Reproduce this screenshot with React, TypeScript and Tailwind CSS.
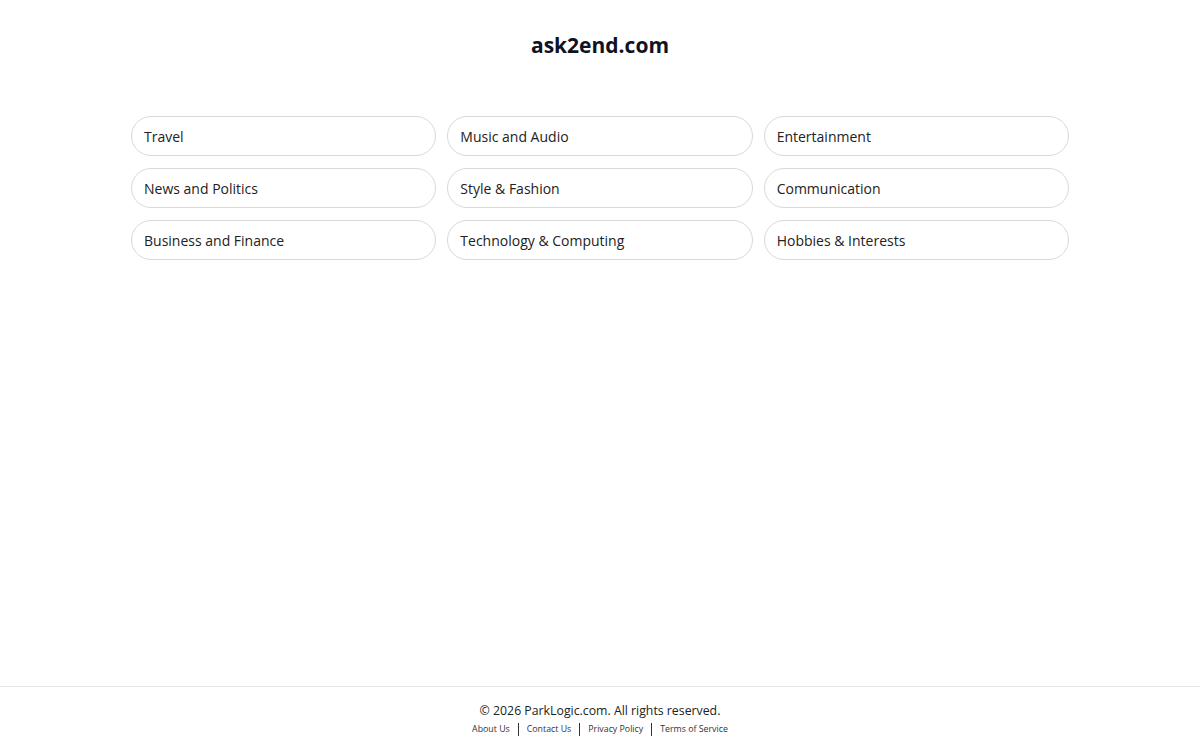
const categories = [
  "Travel",
  "Music and Audio",
  "Entertainment",
  "News and Politics",
  "Style & Fashion",
  "Communication",
  "Business and Finance",
  "Technology & Computing",
  "Hobbies & Interests",
];

const links = ["About Us", "Contact Us", "Privacy Policy", "Terms of Service"];

export default function App() {
  return (
    <div
      className="flex min-h-screen flex-col bg-white text-[#1a1a1a]"
      style={{ fontFamily: '"Open Sans", "Noto Sans", sans-serif' }}
    >
      <main className="flex-1">
        <h1 className="pt-[31px] text-center text-[21px] font-bold leading-[28px] text-[#0f1222]">
          ask2end.com
        </h1>
        <div className="mx-auto mt-[57px] grid w-[938px] grid-cols-3 gap-x-[11px] gap-y-3">
          {categories.map((c) => (
            <a
              key={c}
              href="#"
              className="flex h-10 items-center rounded-full border border-[#d9d9d9] px-3 pt-[1px] text-[14px] text-[#222]"
            >
              {c}
            </a>
          ))}
        </div>
      </main>
      <footer className="border-t border-[#e8e8e8] pt-[15px] pb-[14px] text-center">
        <p className="text-[12.3px] leading-[18px] text-[#222]">© 2026 ParkLogic.com. All rights reserved.</p>
        <div className="mt-[2px] flex items-center justify-center text-[8.8px] leading-[14px] text-[#333]">
          {links.map((l, i) => (
            <span key={l} className="flex items-center">
              {i > 0 && <span className="mx-[8px] h-[13px] w-px bg-[#333]" />}
              <a href="#">{l}</a>
            </span>
          ))}
        </div>
      </footer>
    </div>
  );
}
